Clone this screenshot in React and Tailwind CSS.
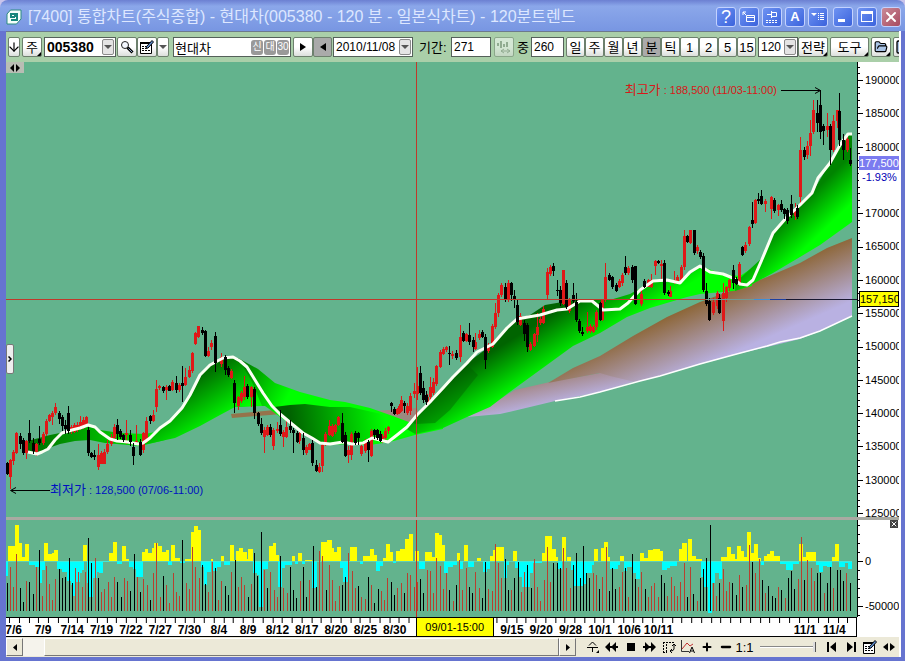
import { ArrowDown, FolderOpen, Minus, Plus, Save, X } from "lucide-react";
import { useState } from "react";

// [x, high, body top, body bottom, low]
const rising = [
  [10, 459, 460, 477, 489], [13, 450, 452, 461, 465], [16, 432, 433, 453, 454],
  [26, 440, 441, 453, 459], [36, 443, 444, 452, 456], [43, 432, 434, 443, 445],
  [46, 419, 421, 434, 436], [49, 414, 415, 421, 422], [52, 411, 413, 417, 425],
  [55, 403, 407, 413, 415], [71, 425, 427, 430, 434], [74, 423, 425, 432, 433],
  [77, 422, 425, 430, 432], [80, 416, 422, 429, 430], [83, 417, 420, 427, 429],
  [86, 416, 417, 425, 426], [98, 444, 455, 467, 470], [101, 451, 453, 464, 464],
  [104, 449, 452, 464, 464], [107, 440, 444, 452, 454], [111, 434, 437, 444, 446],
  [114, 424, 427, 438, 439], [126, 420, 433, 435, 444], [136, 425, 441, 442, 444],
  [143, 432, 433, 450, 453], [146, 417, 421, 442, 443], [153, 410, 415, 421, 422],
  [156, 380, 389, 407, 412], [159, 385, 386, 388, 390], [166, 385, 387, 390, 400],
  [172, 380, 382, 390, 391], [179, 383, 385, 390, 392], [185, 368, 377, 385, 386],
  [189, 366, 370, 377, 378], [192, 352, 353, 371, 373], [195, 332, 333, 344, 345],
  [198, 326, 326, 337, 338], [208, 347, 351, 356, 357], [211, 340, 343, 347, 350],
  [221, 353, 357, 364, 367], [231, 369, 371, 378, 379], [238, 396, 397, 406, 410],
  [241, 391, 393, 401, 403], [244, 376, 387, 397, 400], [251, 386, 387, 397, 407],
  [264, 427, 430, 437, 453], [267, 425, 427, 435, 436], [273, 428, 430, 446, 450],
  [277, 422, 429, 431, 433], [283, 430, 432, 437, 447], [286, 420, 427, 437, 438],
  [299, 430, 433, 441, 444], [306, 445, 447, 453, 455], [309, 443, 444, 450, 450],
  [319, 463, 467, 472, 473], [322, 444, 445, 466, 472], [325, 432, 434, 445, 446],
  [329, 420, 426, 435, 436], [332, 424, 426, 436, 437], [335, 424, 425, 432, 434],
  [338, 416, 417, 425, 426], [348, 446, 450, 455, 463], [351, 432, 434, 455, 460],
  [361, 442, 446, 454, 456], [365, 439, 442, 451, 453], [371, 429, 431, 456, 457],
  [382, 434, 436, 442, 443], [385, 428, 431, 438, 440], [388, 426, 427, 431, 434],
  [397, 408, 409, 414, 415], [399, 404, 406, 413, 414], [401, 396, 400, 411, 412],
  [407, 403, 406, 413, 415], [410, 393, 396, 411, 415], [414, 383, 391, 394, 398],
  [417, 367, 386, 394, 400], [427, 394, 397, 404, 406], [430, 377, 387, 397, 402],
  [433, 378, 382, 393, 395], [436, 365, 366, 384, 386], [440, 350, 352, 367, 368],
  [443, 347, 349, 354, 355], [446, 346, 347, 350, 352], [452, 351, 354, 356, 359],
  [460, 325, 337, 357, 362], [466, 333, 334, 341, 342], [475, 333, 342, 349, 350],
  [479, 330, 334, 338, 340], [488, 343, 345, 351, 353], [492, 324, 326, 347, 348],
  [495, 303, 313, 327, 329], [498, 293, 295, 313, 317], [501, 283, 285, 295, 297],
  [508, 280, 283, 300, 302], [520, 313, 316, 325, 326], [530, 342, 344, 350, 351],
  [534, 333, 334, 346, 347], [537, 313, 327, 335, 342], [540, 317, 319, 323, 325],
  [543, 306, 309, 323, 324], [547, 268, 272, 295, 299], [550, 265, 267, 274, 276],
  [563, 270, 270, 304, 305], [569, 298, 300, 311, 313], [587, 312, 327, 331, 333],
  [590, 324, 326, 331, 333], [593, 325, 327, 332, 333], [596, 310, 312, 327, 330],
  [602, 299, 300, 320, 321], [605, 263, 277, 300, 302], [619, 279, 281, 287, 288],
  [622, 273, 275, 283, 286], [628, 266, 268, 273, 275], [641, 290, 294, 304, 306],
  [648, 279, 280, 287, 287], [651, 274, 280, 287, 288], [655, 260, 261, 266, 275],
  [661, 260, 264, 266, 280], [670, 286, 291, 297, 297], [674, 271, 280, 283, 284],
  [677, 275, 277, 283, 284], [681, 265, 267, 280, 281], [684, 230, 236, 267, 270],
  [690, 230, 230, 243, 244], [697, 245, 247, 251, 254], [713, 298, 302, 313, 315],
  [717, 291, 293, 306, 309], [723, 283, 293, 321, 331], [726, 286, 287, 298, 302],
  [729, 279, 280, 288, 291], [739, 262, 264, 283, 286], [745, 242, 245, 251, 253],
  [749, 226, 227, 244, 246], [755, 199, 200, 223, 224], [765, 199, 201, 204, 212],
  [771, 196, 197, 209, 219], [778, 204, 205, 210, 216], [795, 203, 208, 216, 220],
  [800, 137, 150, 197, 203], [807, 141, 146, 155, 159], [810, 120, 133, 146, 156],
  [813, 100, 110, 132, 134], [827, 113, 126, 130, 137], [833, 115, 121, 150, 152],
  [837, 110, 110, 121, 128], [847, 134, 139, 150, 152],
];

const falling = [
  [7, 462, 463, 474, 475], [20, 433, 436, 444, 449], [23, 438, 440, 453, 455],
  [29, 420, 433, 441, 443], [33, 438, 443, 451, 454], [39, 426, 439, 443, 445],
  [59, 411, 413, 419, 424], [62, 415, 417, 426, 431], [65, 420, 425, 429, 434],
  [68, 406, 413, 431, 434], [88, 427, 430, 453, 456], [91, 452, 453, 457, 458],
  [94, 450, 455, 457, 460], [117, 419, 425, 434, 440], [120, 429, 431, 437, 439],
  [123, 434, 435, 440, 442], [130, 430, 435, 442, 446], [133, 443, 447, 456, 465],
  [140, 439, 442, 455, 456], [150, 415, 416, 421, 424], [163, 386, 387, 391, 393],
  [169, 385, 386, 391, 391], [176, 376, 383, 390, 393], [182, 366, 383, 386, 402],
  [202, 327, 330, 333, 335], [205, 330, 331, 356, 357], [215, 332, 336, 363, 372],
  [225, 355, 357, 370, 375], [228, 366, 368, 375, 377], [234, 380, 383, 403, 413],
  [247, 384, 386, 397, 399], [254, 387, 389, 413, 419], [258, 412, 413, 424, 426],
  [261, 418, 424, 433, 435], [270, 424, 427, 435, 437], [280, 410, 425, 434, 436],
  [290, 420, 426, 430, 433], [293, 428, 430, 433, 453], [297, 431, 433, 442, 443],
  [303, 433, 438, 450, 455], [312, 440, 443, 463, 466], [316, 460, 465, 471, 472],
  [342, 413, 423, 442, 443], [345, 432, 435, 456, 457], [355, 431, 433, 443, 445],
  [358, 432, 433, 438, 445], [368, 440, 442, 450, 462], [374, 429, 430, 435, 439],
  [377, 429, 430, 438, 440], [380, 431, 434, 441, 442], [391, 402, 403, 406, 412],
  [394, 407, 409, 414, 415], [404, 401, 403, 406, 413], [420, 366, 373, 393, 395],
  [423, 381, 388, 400, 403], [426, 391, 395, 402, 405], [449, 346, 353, 354, 365],
  [456, 350, 353, 358, 360], [463, 331, 333, 341, 342], [469, 323, 335, 342, 345],
  [473, 337, 340, 347, 352], [482, 330, 332, 337, 338], [485, 334, 337, 360, 369],
  [505, 283, 287, 300, 302], [511, 282, 283, 295, 301], [514, 290, 296, 299, 308],
  [517, 300, 305, 322, 325], [524, 320, 323, 334, 341], [527, 323, 325, 347, 352],
  [553, 263, 266, 271, 276], [557, 280, 290, 291, 296], [560, 286, 290, 303, 306],
  [566, 280, 283, 307, 309], [573, 283, 295, 301, 303], [576, 293, 302, 320, 322],
  [579, 319, 321, 331, 333], [582, 327, 332, 334, 336], [600, 302, 303, 320, 321],
  [609, 273, 275, 280, 281], [612, 276, 277, 287, 289], [616, 283, 285, 291, 292],
  [625, 256, 267, 273, 275], [632, 265, 267, 280, 283], [635, 266, 266, 304, 305],
  [644, 279, 281, 287, 288], [658, 260, 261, 263, 264], [664, 260, 263, 293, 295],
  [668, 290, 292, 294, 296], [687, 235, 236, 242, 243], [694, 230, 230, 253, 255],
  [700, 250, 252, 257, 259], [703, 253, 256, 290, 292], [706, 283, 291, 304, 306],
  [709, 298, 301, 320, 321], [719, 294, 298, 313, 314], [733, 265, 270, 283, 289],
  [736, 277, 279, 284, 285], [742, 246, 247, 255, 256], [752, 202, 220, 224, 228],
  [758, 193, 199, 201, 204], [761, 190, 196, 204, 205], [774, 198, 200, 211, 213],
  [781, 200, 204, 210, 212], [784, 208, 209, 214, 219], [787, 208, 210, 221, 224],
  [791, 195, 204, 215, 218], [797, 205, 208, 217, 219], [804, 147, 150, 157, 160],
  [817, 100, 113, 123, 132], [820, 91, 105, 132, 139], [823, 124, 126, 131, 145],
  [830, 124, 126, 150, 165], [839, 93, 111, 140, 146], [843, 134, 140, 150, 160],
  [850, 148, 160, 164, 166],
];

// [from, to, edge] in indicator units, the zero line is at 153
const oscillator = [
  [18, 25, 198], [25, 45, 108], [45, 57, 45], [57, 66, 100], [66, 75, 140],
  [75, 87, 103], [87, 105, 165], [105, 120, 172], [120, 126, 218], [126, 135, 180],
  [132, 145, 100], [145, 155, 132], [155, 163, 128], [163, 173, 120], [172, 186, 178],
  [186, 200, 185], [200, 212, 212], [212, 220, 225], [220, 228, 257], [228, 240, 215],
  [240, 247, 190], [247, 251, 180], [249, 261, 105], [261, 268, 220], [268, 280, 260],
  [280, 290, 205], [290, 297, 185], [297, 309, 190], [309, 327, 156], [327, 339, 130],
  [339, 351, 95], [351, 366, 162], [366, 378, 108], [378, 388, 148], [388, 400, 172],
  [400, 407, 178], [407, 428, 200], [427, 436, 125], [436, 445, 118], [445, 455, 130],
  [455, 463, 115], [463, 475, 100], [475, 485, 108], [485, 498, 125], [498, 506, 120],
  [505, 515, 165], [514, 526, 105], [526, 540, 143], [540, 555, 160], [555, 573, 148],
  [573, 582, 65], [582, 594, 48], [594, 603, 60], [603, 612, 170], [612, 622, 225],
  [622, 632, 185], [632, 640, 148], [640, 650, 182], [650, 662, 172], [662, 672, 138],
  [672, 690, 165], [690, 702, 105], [702, 708, 150], [708, 718, 122], [718, 728, 115],
  [728, 740, 125], [740, 745, 148], [745, 760, 118], [760, 770, 190], [770, 778, 195],
  [778, 790, 292], [790, 805, 178], [806, 818, 108], [818, 828, 100], [828, 836, 135],
  [835, 845, 230], [845, 855, 175], [855, 875, 165], [875, 885, 138], [885, 893, 162],
  [893, 905, 130], [905, 915, 163], [915, 935, 150], [935, 952, 235], [962, 980, 95],
  [980, 995, 90], [995, 1003, 115], [1003, 1012, 125], [1012, 1023, 112],
  [1021, 1030, 175], [1030, 1045, 215], [1050, 1070, 110], [1080, 1090, 163],
  [1090, 1110, 138], [1110, 1122, 118], [1122, 1131, 135], [1128, 1140, 182],
  [1140, 1149, 168], [1149, 1158, 143], [1158, 1170, 103], [1170, 1178, 125],
  [1178, 1188, 160], [1188, 1200, 123], [1200, 1215, 118], [1215, 1227, 88],
  [1227, 1240, 72], [1245, 1257, 123], [1257, 1275, 178], [1275, 1295, 127],
  [1295, 1305, 140], [1305, 1318, 68], [1318, 1326, 75], [1326, 1335, 105],
  [1333, 1345, 188], [1345, 1360, 170], [1360, 1370, 165], [1370, 1381, 130],
  [1380, 1390, 178], [1392, 1404, 105], [1404, 1423, 172], [1430, 1443, 145],
  [1450, 1462, 185], [1462, 1470, 178], [1470, 1478, 138], [1478, 1488, 120],
  [1488, 1512, 110], [1512, 1520, 205], [1520, 1528, 165], [1538, 1551, 123],
  [1545, 1555, 175], [1555, 1565, 200], [1565, 1590, 232], [1590, 1600, 190],
  [1600, 1627, 159], [1627, 1635, 130], [1635, 1656, 78], [1656, 1667, 118],
  [1667, 1673, 140], [1673, 1686, 178], [1686, 1698, 82], [1700, 1712, 140],
  [1712, 1720, 180], [1720, 1750, 228], [1750, 1762, 222], [1762, 1775, 190],
  [1775, 1781, 165], [1781, 1793, 118], [1803, 1813, 115], [1813, 1823, 97],
  [1823, 1831, 140], [1831, 1855, 178], [1855, 1861, 165], [1861, 1872, 137],
  [1871, 1881, 182], [1881, 1897, 172], [1897, 1908, 190], [1908, 1919, 208],
  [1921, 1932, 130], [1932, 1945, 143], [1945, 1958, 120], [1958, 1980, 117],
  [1980, 1988, 123], [1987, 2000, 180], [2000, 2010, 175], [2010, 2032, 168],
  [2037, 2047, 118], [2047, 2060, 100], [2064, 2076, 88], [2076, 2088, 138],
  [2088, 2105, 148], [2103, 2113, 200], [2113, 2123, 230], [2123, 2136, 308],
  [2136, 2146, 220], [2146, 2156, 190], [2156, 2165, 208], [2164, 2180, 142],
  [2180, 2192, 112], [2192, 2205, 133], [2205, 2212, 148], [2212, 2224, 108],
  [2224, 2233, 122], [2233, 2241, 140], [2241, 2253, 67], [2253, 2262, 130],
  [2262, 2274, 103], [2274, 2282, 145], [2282, 2291, 166], [2291, 2300, 138],
  [2300, 2310, 132], [2310, 2322, 123], [2322, 2340, 137], [2341, 2357, 162],
  [2357, 2378, 180], [2378, 2397, 162], [2397, 2409, 103], [2409, 2418, 140],
  [2418, 2448, 127], [2448, 2457, 165], [2457, 2469, 187], [2469, 2480, 168],
  [2480, 2496, 170], [2497, 2504, 140], [2504, 2517, 102], [2517, 2535, 172],
  [2535, 2545, 160], [2545, 2557, 178],
];

// one bar per candle, positive closes up, negative closes down
const volumes = [
  -84, 132, 72, 169, -67, -27, 89, -87, -49, 132, -182, 44, 134, 80, 32, 94, -124,
  -97, -102, -157, -82, 129, 117, 70, 117, -217, -142, 159, -97, 57, 65, 87, 42,
  102, -87, -40, 99, 89, -59, -170, 102, -55, 95, 77, -32, 112, 202, 40, -105, 77,
  24, 112, 57, 44, -212, 84, 65, 192, 132, 97, -137, -80, 55, 145, -127, 32, 89,
  -74, -47, 117, -152, 72, 102, 77, -42, 80, -174, -105, -237, 122, -69, 117, 62,
  40, -164, 67, 52, -132, -62, -37, 89, -132, -40, 92, -194, -72, 180, 164, -62,
  137, 92, 30, 74, -77, -102, 172, 119, 67, -74, 40, 36, -102, 77, -22, -65, 59,
  32, 97, -87, -47, 67, 82, -52, 114, 107, 72, 87, -95, -52, 122, 119, 54, 159,
  134, 65, 114, -62, 30, -77, 152, 62, 127, -72, -52, 115, 67, -39, -147, 65, 60,
  199, 142, 97, -154, -62, 62, -97, -145, 57, 117, -137, -67, 154, 72, 30, 92, 192,
  87, -142, -144, -127, 187, 127, 67, -137, -172, -97, -194, -112, -97, 112, 107,
  -64, 102, 192, -59, -129, -65, 72, 117, -127, 42, -170, -95, 70, 117, -64, 40,
  74, 82, 40, -107, -82, 44, 102, 74, 44, 87, 142, -40, 132, -50, 30, -97, -125,
  -159, -257, 84, 44, -82, 124, 59, 87, -82, -47, 107, -70, 77, 197, -145, 112,
  154, -92, 54, -74, -45, -37, 72, -62, 37, -97, -119, -64, 95, 222, -92, 152, 127,
  89, -112, -114, 52, -84, -132, 67, -122, -122, -89, 112, -82,
];

const trend =
  "28,452 37,454 42,452 48,449 55,440 62,433 72,430 80,428 88,425 95,427 100,432 110,439 117,441 128,442 138,444 143,443 150,438 160,428 170,421 182,408 190,395 200,375 210,365 223,358 233,357 240,361 247,367 255,380 263,393 272,406 280,414 292,424 303,433 312,438 320,443 330,444 343,442 352,444 363,443 372,438 380,440 388,442 397,435 407,427 417,415 430,402 443,388 453,377 467,363 477,352 493,344 507,328 517,319 528,317 540,315 557,310 567,309 580,301 592,301 603,310 620,309 628,303 640,290 653,281 667,280 680,283 690,272 700,266 710,272 723,274 733,278 740,284 747,285 753,280 763,257 773,233 787,217 800,205 812,193 818,178 830,163 840,145 848,134 852,134";

// the last price tag takes the place of 175000
const prices = [
  "190000", "185000", "180000", "", "170000", "165000", "160000", "155000",
  "150000", "145000", "140000", "135000", "130000", "125000",
];

const dates = [
  "7/6", "7/9", "7/14", "7/19", "7/22", "7/27", "7/30", "8/4", "8/9", "8/12",
  "8/17", "8/20", "8/25", "8/30", "", "", "", "9/15", "9/20", "9/28",
  "10/1", "10/6", "10/11", "", "", "", "", "11/1", "11/4",
];

const periods = ["일", "주", "월", "년", "분", "틱", "1", "2", "5", "15"];

function Candles({ items, color }) {
  return (
    <g fill={color}>
      {items.map(([x, high, top, bottom, low]) => (
        <g key={x}>
          <rect x={x} y={high} width="1" height={low - high} />
          <rect x={x - 1} y={top} width="3" height={Math.max(bottom - top, 1)} />
        </g>
      ))}
    </g>
  );
}

function Gradient({ id, from, to, start, end, hold = 0 }) {
  return (
    <linearGradient
      id={id}
      gradientUnits="userSpaceOnUse"
      x1={from[0]}
      y1={from[1]}
      x2={to[0]}
      y2={to[1]}
    >
      <stop offset={hold} stopColor={start} />
      <stop offset="1" stopColor={end} />
    </linearGradient>
  );
}

function PriceChart() {
  return (
    <svg
      className="block h-full w-full"
      viewBox="6 62 851 455"
      preserveAspectRatio="none"
    >
      <defs>
        <Gradient id="first" from={[30, 440]} to={[150, 440]} start="#006c00" end="#00e800" />
        <Gradient id="hill" from={[195, 380]} to={[222, 422]} start="#007000" end="#00ff00" />
        <Gradient id="sweep" from={[240, 366]} to={[290, 392]} start="#007800" end="#00ff00" />
        <Gradient id="trough" from={[290, 425]} to={[385, 412]} start="#006000" end="#00ff00" />
        <Gradient id="rise" from={[480, 345]} to={[511, 395]} start="#006400" end="#00ff00" hold={0.2} />
        <Gradient id="rightRise" from={[770, 228]} to={[797, 256]} start="#008400" end="#00ff00" hold={0.1} />
        <Gradient id="cloud" from={[700, 302]} to={[724, 357]} start="#8d6637" end="#b9b1e2" />
        <Gradient id="tail" from={[510, 390]} to={[515, 413]} start="#a5898b" end="#b9b1e2" />
      </defs>

      {/* slow band */}
      <path d="M231 414 L275 410 L282 414 L232 418 Z" fill="#95734b" />
      <path d="M375 411 L417 408 L420 424 L405 424 Z" fill="#9b8a80" />
      <path
        d="M467 417 L490 405 L515 390 L550 382 L600 373 L640 364 L640 380 L600 392 L555 401 L530 407 L500 414 Z"
        fill="url(#tail)"
      />
      <path
        d="M548 383 L573 368 L600 356 L633 336 L667 317 L700 302 L733 290 L767 277 L800 263 L827 248 L852 238 L852 316 L820 331 L800 339 L767 347 L733 355 L700 364 L660 376 L635 382 L610 376 L600 373 Z"
        fill="url(#cloud)"
      />
      <polyline
        points="555,401 580,397 600,392 640,381 660,376 700,364 733,355 767,346 780,342 800,338 820,331 852,316"
        fill="none"
        stroke="#fff"
        strokeWidth="1.4"
      />

      {/* fast band */}
      <path
        d="M24 442 L50 435 L65 432 L88 426 L100 430 L120 433 L145 434 L165 430 L165 440 L153 443 L140 446 L105 443 L90 440 L75 441 L60 444 L46 449 L37 453 L28 451 Z"
        fill="url(#first)"
      />
      <path
        d="M238 358 L258 369 L275 383 L300 392 L330 400 L345 402 L370 408 L390 415 L417 425 L443 424 L443 429 L415 435 L390 442 L370 445 L320 444 L290 424 L265 406 L250 406 L235 407 Z"
        fill="url(#sweep)"
      />
      <path
        d="M138 446 L150 438 L160 428 L170 421 L182 408 L190 395 L200 375 L210 365 L223 358 L233 357 L240 361 L252 382 L262 406 L235 407 L220 415 L200 426 L175 438 Z"
        fill="url(#hill)"
      />
      <path
        d="M274 407 L290 405 L305 404 L330 407 L350 407 L395 417 L395 436 L388 442 L372 438 L363 443 L343 442 L330 444 L320 443 L303 433 L280 414 Z"
        fill="url(#trough)"
      />
      <path
        d="M405 428 L417 415 L443 388 L467 363 L493 344 L517 319 L530 315 L545 305 L580 299 L610 300 L630 294 L653 281 L680 283 L700 266 L723 274 L740 276 L752 268 L752 286 L733 291 L700 294 L687 297 L650 308 L627 317 L600 333 L573 346 L540 370 L507 394 L490 407 L467 417 L443 428 L415 434 Z"
        fill="url(#rise)"
      />
      <path d="M417 416 L443 389 L467 364 L478 375 L450 410 L435 423 L415 424 L412 421 Z" fill="#005c00" opacity="0.4" />
      <path
        d="M735 283 L763 257 L773 233 L787 217 L800 205 L812 193 L830 163 L840 145 L848 135 L852 135 L852 222 L820 245 L800 257 L773 273 L747 287 L735 291 Z"
        fill="url(#rightRise)"
      />

      <Candles items={rising} color="#e01818" />
      <polyline points={trend} fill="none" stroke="#fbfff4" strokeWidth="3" strokeLinejoin="round" />
      <Candles items={falling} color="#000" />

      {/* high and low pointers */}
      <path d="M781 90.5 H820 M815 87.5 L820.5 90.5 L815 93.5 M820.5 90 V105" fill="none" stroke="#000" />
      <path d="M50 490.5 H11 M16 487.5 L10.5 490.5 L16 493.5" fill="none" stroke="#000" />

      {/* crosshair */}
      <rect x="6" y="299" width="700" height="1" fill="#c0392b" />
      <rect x="706" y="299" width="48" height="1" fill="#6f9a94" />
      <rect x="754" y="299" width="16" height="1" fill="#3f8fd8" />
      <rect x="770" y="299" width="16" height="1" fill="#1c3fa0" />
      <rect x="786" y="299" width="71" height="1" fill="#181830" />
      <rect x="416" y="62" width="1" height="455" fill="#c0392b" />
    </svg>
  );
}

function IndicatorChart() {
  const step = 2529 / (volumes.length - 1);
  return (
    <svg
      className="block h-full w-full"
      viewBox="18 30 2553 291"
      preserveAspectRatio="none"
      shapeRendering="crispEdges"
    >
      {oscillator.map(([from, to, edge]) => (
        <rect
          key={from}
          x={from}
          y={Math.min(edge, 153)}
          width={to - from}
          height={Math.abs(edge - 153)}
          fill={edge < 153 ? "#ffff00" : "#00ffff"}
        />
      ))}
      <path d="M18 153 H2557" stroke="#5fe0c8" strokeWidth="2" />
      {volumes.map((v, i) => (
        <rect
          key={i}
          x={20 + i * step}
          y={302 - Math.abs(v)}
          width="3"
          height={Math.abs(v)}
          fill={v < 0 ? "#000" : "#b8402f"}
        />
      ))}
      <rect x="1248" y="30" width="3" height="291" fill="#c62a20" />
    </svg>
  );
}

function PriceAxis() {
  return (
    <div className="relative flex h-full w-[42px] overflow-hidden bg-white">
      <svg className="h-full w-2 shrink-0" viewBox="0 62 8 455" preserveAspectRatio="none" shapeRendering="crispEdges">
        <path d="M0.5 62 V517" stroke="#000" />
        {Array.from({ length: 68 }, (_, i) => (
          <path
            key={i}
            d={`M0 ${Math.round(66.8 + i * 6.66)}.5 h${i % 5 === 2 ? 6 : 3}`}
            stroke="#000"
          />
        ))}
      </svg>
      <div className="-mb-1 flex flex-col justify-between pt-[10px] text-[11px] leading-4">
        {prices.map((p, i) => (
          <span key={i} className="h-4">
            {p}
          </span>
        ))}
      </div>
      <div className="absolute top-[94px] right-0 left-[2px] bg-white text-[11px] leading-[14px]">
        <p className="bg-[#7b7bf0] text-white">177,500</p>
        <p className="pl-[3px] text-[#0000b4]">-1.93%</p>
      </div>
      <div className="absolute top-[229px] right-0 left-[2px] border border-black bg-[#ffff00] text-[11px] leading-[14px]">
        157,150
      </div>
    </div>
  );
}

function TimeAxis() {
  return (
    <div className="relative h-5 overflow-hidden border-y border-r border-black bg-white">
      <div className="h-[5px] w-full">
        <svg className="block h-full w-full" viewBox="6 0 851 5" preserveAspectRatio="none" shapeRendering="crispEdges">
          {Array.from({ length: 87 }, (_, i) => (
            <path key={i} d={`M${Math.round(9 + i * 9.76)}.5 0 V5`} stroke="#000" />
          ))}
        </svg>
      </div>
      <div className="-ml-[7px] mr-[7px] flex text-[12px] leading-[14px] font-bold">
        {dates.map((d, i) => (
          <span key={i} className="flex w-0 flex-1 justify-center">
            {d}
          </span>
        ))}
      </div>
      <div className="absolute -inset-y-px left-[48.2%] w-[78px] border border-black bg-[#ffff00] text-center text-[11px] leading-[18px]">
        09/01-15:00
      </div>
    </div>
  );
}

function NoteIcon() {
  return (
    <svg className="h-[14px] w-[14px] shrink-0" viewBox="0 0 14 14">
      <path d="M0.5 2.5 H11.5 V13.5 H0.5 Z" fill="#fff" stroke="#000" />
      <path d="M0 2 H9 V4 H0 Z" />
      <path d="M2 6.5 H7 M2 8.5 H6 M2 10.5 H10" stroke="#000" strokeDasharray="2 1" />
      <path d="M12 0.5 L13.5 2 L8 8 L6 8.5 L6.5 6.5 Z" fill="#5f8fd0" stroke="#000" />
    </svg>
  );
}

function DownTriangle() {
  return (
    <svg className="h-1 w-2 shrink-0" viewBox="0 0 8 4">
      <path d="M0 0 H8 L4 4 Z" fill="#555" />
    </svg>
  );
}

function ToolButton({ className = "", active, corner, children, ...props }) {
  return (
    <button
      className={`relative flex h-5 shrink-0 items-center justify-center overflow-hidden rounded-[2px] border border-[#6d806d] text-[13px] leading-none whitespace-nowrap ${
        active ? "bg-[#aaaaaa]" : "bg-linear-to-b from-white from-50% to-[#dcdfdc]"
      } ${className}`}
      {...props}
    >
      {children}
      {corner && (
        <svg className="absolute right-0 bottom-0 h-1 w-1" viewBox="0 0 4 4">
          <path d="M4 0 V4 H0 Z" />
        </svg>
      )}
    </button>
  );
}

function DropDown({ label, value, className = "", textClass = "text-[12px]" }) {
  return (
    <div className={`relative h-5 shrink-0 ${className}`}>
      <select
        aria-label={label}
        className={`block h-full w-full appearance-none border border-[#55605a] bg-white pl-[2px] leading-none ${textClass}`}
      >
        <option>{value}</option>
      </select>
      <span className="pointer-events-none absolute inset-y-[2px] right-[2px] flex w-3 items-center justify-center rounded-[2px] border border-[#8a8a8a] bg-[#e4e4e4]">
        <DownTriangle />
      </span>
    </div>
  );
}

function Toolbar() {
  const [period, setPeriod] = useState("분");
  return (
    <div className="flex h-[31px] items-center overflow-hidden border-t border-[#6c7a8c] bg-[#aacfa9] pl-[2px]">
      <ToolButton className="mr-[2px] w-3" aria-label="아래로">
        <ArrowDown className="h-[14px] w-[14px] shrink-0" strokeWidth={2} />
      </ToolButton>
      <ToolButton className="mr-[2px] w-5" corner>주</ToolButton>
      <DropDown label="종목코드" value="005380" className="mr-px w-[72px]" textClass="text-[14px] font-bold" />
      <ToolButton className="w-5" aria-label="검색">
        <svg className="h-[14px] w-[14px]" viewBox="0 0 14 14">
          <circle cx="5" cy="5" r="3.5" fill="#f4f8ff" stroke="#222" />
          <path d="M7.5 7.5 L12.5 12.5" stroke="#000" strokeWidth="3" />
          <path d="M8.5 8.5 L12 12" stroke="#8aa0c8" />
        </svg>
      </ToolButton>
      <ToolButton className="w-5" aria-label="편집">
        <NoteIcon />
      </ToolButton>
      <ToolButton className="mr-1 w-3" aria-label="편집 메뉴">
        <DownTriangle />
      </ToolButton>
      <div className="mr-[2px] flex h-5 w-[118px] shrink-0 items-center gap-px border border-[#55605a] bg-white pr-px">
        <input aria-label="종목명" defaultValue="현대차" className="h-full w-0 flex-1 pl-px text-[13px] outline-none" />
        {["신", "대", "30"].map((t) => (
          <span key={t} className="flex h-[15px] w-3 items-center justify-center rounded-[3px] bg-[#999] text-[10px] leading-none text-white">
            {t}
          </span>
        ))}
      </div>
      <ToolButton className="w-5" aria-label="다음">
        <svg className="h-2 w-[6px]" viewBox="0 0 6 8"><path d="M0 0 L6 4 L0 8 Z" /></svg>
      </ToolButton>
      <ToolButton className="mr-px w-[19px]" active aria-label="이전">
        <svg className="h-2 w-[6px]" viewBox="0 0 6 8"><path d="M6 0 L0 4 L6 8 Z" /></svg>
      </ToolButton>
      <DropDown label="날짜" value="2010/11/08" className="mr-[6px] w-20" />
      <label className="flex shrink-0 items-center text-[13px] leading-none">
        <span className="w-8 whitespace-nowrap">기간:</span>
        <input defaultValue="271" className="h-5 w-10 border border-[#55605a] bg-white pl-[2px] text-[12px]" />
      </label>
      <ToolButton className="mx-[3px] w-5 opacity-50" disabled aria-label="간격">
        <svg className="h-4 w-4" viewBox="0 0 16 16" fill="none" stroke="#7a8a7a" strokeWidth="2">
          <path d="M2 4 V7 M5 2 V9 M8 5 V8 M11 3 V8" />
          <path d="M5 12 H14 M8 10 L5 12 L8 14 M11 10 L14 12 L11 14" strokeWidth="1" />
        </svg>
      </ToolButton>
      <label className="mr-[2px] flex shrink-0 items-center text-[13px] leading-none">
        <span className="w-[14px]">중</span>
        <input defaultValue="260" className="h-5 w-[33px] border border-[#55605a] bg-white pl-[2px] text-[12px]" />
      </label>
      <div className="mr-[2px] flex shrink-0">
        {periods.map((p) => (
          <ToolButton key={p} className="w-[19px]" active={p === period} onClick={() => setPeriod(p)}>
            {p}
          </ToolButton>
        ))}
      </div>
      <DropDown label="분 간격" value="120" className="w-10" />
      <ToolButton className="mr-[2px] w-[30px]" corner>전략</ToolButton>
      <ToolButton className="mr-[2px] w-[39px]" corner>도구</ToolButton>
      <ToolButton className="mr-[2px] w-5" corner aria-label="열기">
        <FolderOpen className="h-[14px] w-[14px]" fill="#a9c4e6" />
      </ToolButton>
      <ToolButton className="w-5" aria-label="저장">
        <Save className="h-4 w-4 shrink-0" fill="#a9c4e6" />
      </ToolButton>
    </div>
  );
}

function TitleButton({ className = "", label, children }) {
  return (
    <button
      aria-label={label}
      className={`flex h-5 w-5 items-center justify-center rounded-[3px] border border-[#c3d2ff] text-white ${
        className || "bg-linear-to-br from-[#6f93f2] to-[#3b62dc]"
      }`}
    >
      {children}
    </button>
  );
}

function TitleBar() {
  return (
    <header className="flex h-[31px] items-center rounded-t-lg bg-linear-to-b from-[#6c80d2] via-[#8ba7ea] via-20% to-[#7896e2] pt-[2px] pr-1 pl-[6px]">
      <svg className="mr-[6px] h-4 w-4 shrink-0" viewBox="0 0 16 16">
        <path d="M4.5 1 H15 V10 L10.5 15 H1 V5 Z" fill="#f4fffb" stroke="#2c8b80" />
        <path d="M12 5 H5 V8 H9 M5 11 H11 V7 H8" fill="none" stroke="#16877c" strokeWidth="2" />
      </svg>
      <h1 className="flex-1 truncate text-[16px] leading-5 text-[#dde7ff]">
        [7400] 통합차트(주식종합) - 현대차(005380 - 120 분 - 일본식차트) - 120분트렌드
      </h1>
      <div className="flex gap-[3px]">
        <TitleButton label="도움말"><span className="text-[18px] leading-none">?</span></TitleButton>
        <TitleButton label="창 분리">
          <svg className="h-4 w-4" viewBox="0 0 16 16" fill="none" stroke="#fff">
            <path d="M5.5 6.5 H13.5 V12.5 H5.5 Z M5 8.5 H14 M2 6 V3 H5 M2 3 L5 6" />
          </svg>
        </TitleButton>
        <TitleButton label="고정">
          <svg className="h-4 w-4" viewBox="0 0 16 16" fill="none" stroke="#fff">
            <path d="M3 5.5 H7 M7.5 2 V9 M7 3.5 H12.5 V7.5 H7" />
            <path d="M2 11.5 H14 M2 13.5 H14" strokeDasharray="2 1" />
          </svg>
        </TitleButton>
        <TitleButton label="글꼴"><span className="text-[13px] leading-none font-bold">A</span></TitleButton>
        <TitleButton label="메뉴">
          <svg className="h-4 w-4" viewBox="0 0 16 16" fill="none" stroke="#fff">
            <path d="M1 4 H7 L4 7 Z" fill="#fff" stroke="none" />
            <path d="M8 4.5 H14 M8 6.5 H14 M8 8.5 H14 M8 10.5 H14" strokeDasharray="1 1 6" />
          </svg>
        </TitleButton>
        <div className="ml-[2px] flex gap-1">
          <TitleButton label="최소화"><span className="mt-2 mr-1 h-[3px] w-[7px] bg-white" /></TitleButton>
          <TitleButton label="최대화"><span className="h-[11px] w-3 border border-t-[3px] border-white" /></TitleButton>
          <TitleButton label="닫기" className="bg-linear-to-br from-[#c98a98] to-[#a84a60]">
            <X className="h-4 w-4" strokeWidth={3} />
          </TitleButton>
        </div>
      </div>
    </header>
  );
}

function IconButton({ label, children }) {
  return (
    <button aria-label={label} className="flex h-4 w-[19px] shrink-0 items-center justify-center text-[13px] leading-none">
      {children}
    </button>
  );
}

function Glyph({ d }) {
  return (
    <svg className="h-3 w-[14px]" viewBox="0 0 14 12">
      <path d={d} />
    </svg>
  );
}

function BottomBar() {
  return (
    <footer className="flex h-5 items-center overflow-hidden bg-[#ece9d8]">
      <div className="flex h-[18px] w-[570px] min-w-0 bg-[#f5f3ec]">
        <button aria-label="왼쪽으로" className="flex w-[17px] items-center justify-center border border-t-white border-r-[#777] border-b-[#777] border-l-white bg-[#ece9d8]">
          <svg className="h-[7px] w-1" viewBox="0 0 4 7"><path d="M4 0 L0 3.5 L4 7 Z" /></svg>
        </button>
        <span className="w-[21px]" />
        <button aria-label="스크롤" className="flex-1 border border-t-white border-r-[#777] border-b-[#777] border-l-white bg-[#ece9d8]" />
        <button aria-label="오른쪽으로" className="flex w-[17px] items-center justify-center border border-t-white border-r-[#777] border-b-[#777] border-l-white bg-[#ece9d8]">
          <svg className="h-[7px] w-1" viewBox="0 0 4 7"><path d="M0 0 L4 3.5 L0 7 Z" /></svg>
        </button>
      </div>
      <div className="ml-[7px] flex shrink-0 items-center">
        <IconButton label="이동">
          <svg className="h-3 w-[14px]" viewBox="0 0 14 12" fill="none" stroke="#000">
            <path d="M3 4.5 L6.5 1 L10 4.5 M1 6.5 H12 M6.5 7 V11" />
            <path d="M13 9 V12 H10 Z" fill="#000" stroke="none" />
          </svg>
        </IconButton>
        <IconButton label="빠르게 뒤로"><Glyph d="M0 6 L5 1 V5 H7 L11 1 V5 H13 V7 H11 V11 L7 7 H5 V11 Z" /></IconButton>
        <IconButton label="정지"><Glyph d="M3 2 H11 V10 H3 Z" /></IconButton>
        <IconButton label="빠르게 앞으로"><Glyph d="M13 6 L8 1 V5 H6 L2 1 V5 H0 V7 H2 V11 L6 7 H8 V11 Z" /></IconButton>
        <IconButton label="영역">
          <svg className="h-3 w-[14px]" viewBox="0 0 14 12" fill="none" stroke="#000">
            <path d="M1 1.5 H12 M1.5 1 V11 M4.5 3 V12 M1 11.5 H5" strokeDasharray="2 1" />
            <path d="M12 4 V8 Q12 10 8 10 M10 8 L8 10 L10 12 M10 5 L12 3 L14 5" />
          </svg>
        </IconButton>
        <IconButton label="자동 분석">
          <svg className="h-[14px] w-4" viewBox="0 0 16 14" fill="none">
            <path d="M1.5 0 V11.5 H9" stroke="#333" />
            <path d="M2 9 L7 3 L10 6 L13 4" stroke="#c03030" />
            <path d="M9.5 13 L12 7 L14.5 13 M10.5 11 H13.5" stroke="#000" />
          </svg>
        </IconButton>
        <IconButton label="확대"><Plus className="h-3 w-3" strokeWidth={4} /></IconButton>
        <IconButton label="축소"><Minus className="h-[14px] w-[14px]" strokeWidth={4} /></IconButton>
        <IconButton label="원래 크기">1:1</IconButton>
      </div>
      <input
        type="range"
        aria-label="배율"
        defaultValue="100"
        className="mx-[6px] h-3 w-14 shrink-0 appearance-none bg-transparent [&::-webkit-slider-runnable-track]:h-[2px] [&::-webkit-slider-runnable-track]:border-t [&::-webkit-slider-runnable-track]:border-b [&::-webkit-slider-runnable-track]:border-t-[#888] [&::-webkit-slider-runnable-track]:border-b-white [&::-webkit-slider-thumb]:-mt-[5px] [&::-webkit-slider-thumb]:h-[10px] [&::-webkit-slider-thumb]:w-[3px] [&::-webkit-slider-thumb]:appearance-none [&::-webkit-slider-thumb]:border-r [&::-webkit-slider-thumb]:border-[#555] [&::-webkit-slider-thumb]:bg-[#ddd]"
      />
      <div className="flex shrink-0 items-center">
        <IconButton label="처음"><Glyph d="M2 1 H4 V11 H2 Z M11 1 V11 L5 6 Z" /></IconButton>
        <IconButton label="끝"><Glyph d="M10 1 H12 V11 H10 Z M3 1 V11 L9 6 Z" /></IconButton>
        <IconButton label="설정"><NoteIcon /></IconButton>
        <IconButton label="좌우"><Glyph d="M1 6 L6 2 V10 Z M13 6 L8 2 V10 Z" /></IconButton>
      </div>
    </footer>
  );
}

function App() {
  return (
    <div className="flex h-screen flex-col overflow-hidden bg-[#c9c4ec] font-['Liberation_Sans','Noto_Sans_CJK_KR',sans-serif] text-black">
      <TitleBar />
      <main className="flex min-h-0 flex-1 flex-col border-r-4 border-b-4 border-l-[6px] border-[#6674d0]">
        <div className="flex min-h-0 flex-1 flex-col border-r-2 border-white">
          <Toolbar />
          <div className="flex min-h-0 flex-1">
            <div className="flex min-w-0 flex-1 flex-col bg-[#63b38d]">
              <section className="relative min-h-0 flex-1">
                <PriceChart />
                <button aria-label="폭 조절" className="absolute top-0 left-0 flex h-[11px] w-[18px] items-center justify-center bg-[#b9bdb4]">
                  <svg className="h-2 w-[10px]" viewBox="0 0 10 8"><path d="M4 0 V8 L0 4 Z M6 0 V8 L10 4 Z" /></svg>
                </button>
                <button aria-label="펼치기" className="absolute top-[62%] left-0 flex h-[30px] w-2 items-center justify-center rounded-[2px] border border-[#777] bg-[#eee]">
                  <svg className="h-[6px] w-1" viewBox="0 0 4 6" fill="none" stroke="#000" strokeWidth="1.5"><path d="M0.5 0.5 L3 3 L0.5 5.5" /></svg>
                </button>
                <p className="absolute top-5 right-20 text-[11px] leading-4 text-[#d81818]">
                  <span className="text-[13px]">최고가</span> : 188,500 (11/03-11:00)
                </p>
                <p className="absolute bottom-[19px] left-11 text-[11px] leading-4 text-[#0010c0]">
                  <span className="text-[13px]">최저가</span> : 128,500 (07/06-11:00)
                </p>
              </section>
              <div className="h-[3px] bg-[#a9aaa2]" />
              <section className="h-[97px]">
                <IndicatorChart />
              </section>
              <TimeAxis />
            </div>
            <div className="flex w-[42px] flex-col bg-white">
              <div className="min-h-0 flex-1">
                <PriceAxis />
              </div>
              <div className="h-[3px] bg-[#a9aaa2]" />
              <div className="relative flex h-[97px] overflow-hidden">
                <svg className="h-full w-2 shrink-0" viewBox="0 520 8 97" preserveAspectRatio="none" shapeRendering="crispEdges">
                  <path d="M0.5 520 V617" stroke="#000" />
                  <path d="M0 525.5 h3 M0 534.5 h3 M0 543.5 h3 M0 552.5 h3 M0 561.5 h6 M0 570.5 h3 M0 579.5 h3 M0 588.5 h3 M0 597.5 h3 M0 606.5 h6 M0 615.5 h3" stroke="#000" />
                </svg>
                <div className="flex flex-col justify-between pt-[33px] pb-[3px] text-[11px] leading-4">
                  <span>0</span>
                  <span>-50000</span>
                </div>
                <button aria-label="지표 닫기" className="absolute top-0 right-px flex h-2 w-2 items-center justify-center bg-[#444] text-white">
                  <X className="h-2 w-2" strokeWidth={3} />
                </button>
              </div>
              <div className="h-5" />
            </div>
          </div>
          <BottomBar />
        </div>
      </main>
    </div>
  );
}

export default App;
